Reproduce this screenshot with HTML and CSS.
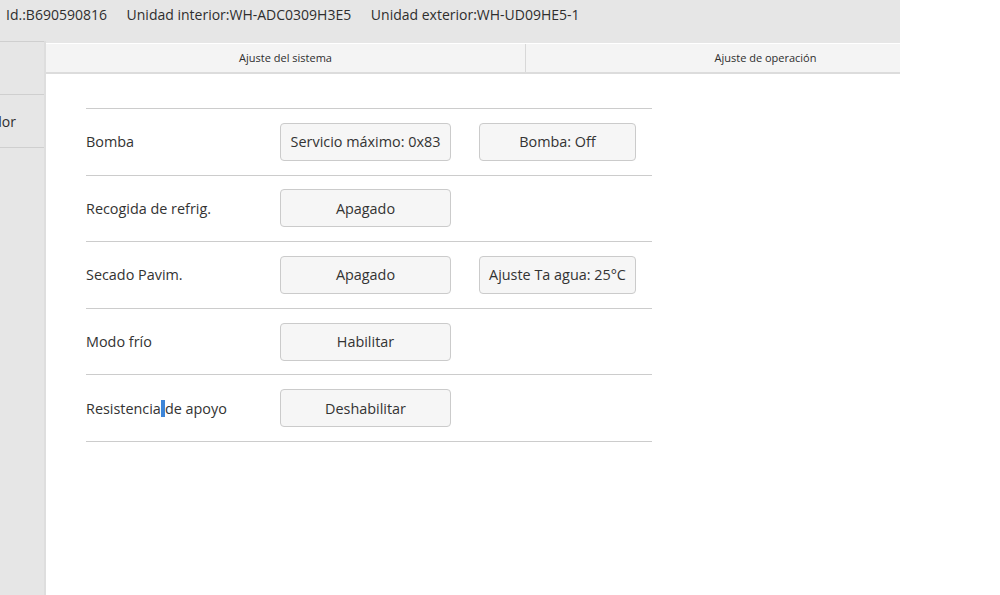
FILE: index.html
```html
<!DOCTYPE html>
<html>
<head>
  <title>Ajuste del sistema</title>
  <link rel="stylesheet" href="styles.css">
</head>
<body>
  <div class="app">
    <div class="topbar">
      <span>Id.:B690590816</span>
      <span>Unidad interior:WH-ADC0309H3E5</span>
      <span>Unidad exterior:WH-UD09HE5-1</span>
    </div>
    <div class="main">
      <div class="sidebar">
        <div class="side-item"></div>
        <div class="side-item"><span class="side-text">Exterior del calentador</span></div>
      </div>
      <div class="content">
        <div class="tabs">
          <div class="tab">Ajuste del sistema</div>
          <div class="tab">Ajuste de operación</div>
        </div>
        <div class="panel">
          <div class="settings">
            <div class="row">
              <div class="label">Bomba</div>
              <button class="btn">Servicio máximo: 0x83</button>
              <button class="btn btn-small">Bomba: Off</button>
            </div>
            <div class="row">
              <div class="label">Recogida de refrig.</div>
              <button class="btn">Apagado</button>
            </div>
            <div class="row">
              <div class="label">Secado Pavim.</div>
              <button class="btn">Apagado</button>
              <button class="btn btn-small">Ajuste Ta agua: 25°C</button>
            </div>
            <div class="row">
              <div class="label">Modo frío</div>
              <button class="btn">Habilitar</button>
            </div>
            <div class="row">
              <div class="label">Resistencia<span class="sel"> </span>de apoyo</div>
              <button class="btn">Deshabilitar</button>
            </div>
          </div>
        </div>
      </div>
    </div>
  </div>
</body>
</html>
```

FILE: styles.css
```css
body {
  margin: 0;
  font-family: "Open Sans", "DejaVu Sans", sans-serif;
  color: #333;
  background: #fff;
}

.app {
  width: 900px;
  height: 595px;
  overflow: hidden;
}

.topbar {
  height: 43px;
  background: #e6e6e6;
  font-size: 14px;
  line-height: 30px;
  padding-left: 6px;
  white-space: nowrap;
  color: #2e2e2e;
}

.topbar span {
  margin-right: 16px;
}

.main {
  display: flex;
  height: 552px;
}

.sidebar {
  width: 44px;
  flex: none;
  background: #e6e6e6;
  border-right: 2px solid #dedede;
  margin-top: -2px;
  overflow: hidden;
}

.side-item {
  height: 52px;
  border-top: 1px solid #cfcfcf;
  display: flex;
  align-items: center;
  justify-content: flex-end;
  font-size: 14px;
  white-space: nowrap;
  color: #2e2e2e;
}

.side-item:last-child {
  border-bottom: 1px solid #cfcfcf;
}

.side-text {
  margin-right: 28px;
}

.content {
  flex: 1;
  background: #fff;
  min-width: 0;
}

.tabs {
  display: flex;
  height: 28px;
  margin-top: 1px;
  background: #f4f4f4;
  border-bottom: 2px solid #dcdcdc;
}

.tab {
  width: 479px;
  flex: none;
  font-size: 11px;
  line-height: 28px;
  text-align: center;
  color: #2e2e2e;
}

.tab:first-child {
  border-right: 1px solid #d8d8d8;
}

.panel {
  padding: 34px 0 0 40px;
}

.settings {
  width: 566px;
  border-top: 1px solid #cccccc;
}

.row {
  height: 65.6px;
  border-bottom: 1px solid #cccccc;
  display: flex;
  align-items: center;
}

.label {
  width: 194px;
  flex: none;
  font-size: 14.4px;
  font-weight: 500;
  color: #333;
}

.sel {
  background: #3d85d8;
  display: inline-block;
  width: 4px;
  height: 17px;
  vertical-align: -3px;
}

.btn {
  flex: none;
  width: 171px;
  height: 38px;
  margin-right: 28px;
  padding: 0;
  background: #f6f6f6;
  border: 1px solid #cbcbcb;
  border-radius: 4px;
  font-family: "Open Sans", "DejaVu Sans", sans-serif;
  font-size: 14.4px;
  font-weight: 500;
  color: #333;
}

.btn-small {
  width: 157px;
  margin-right: 0;
}
```
